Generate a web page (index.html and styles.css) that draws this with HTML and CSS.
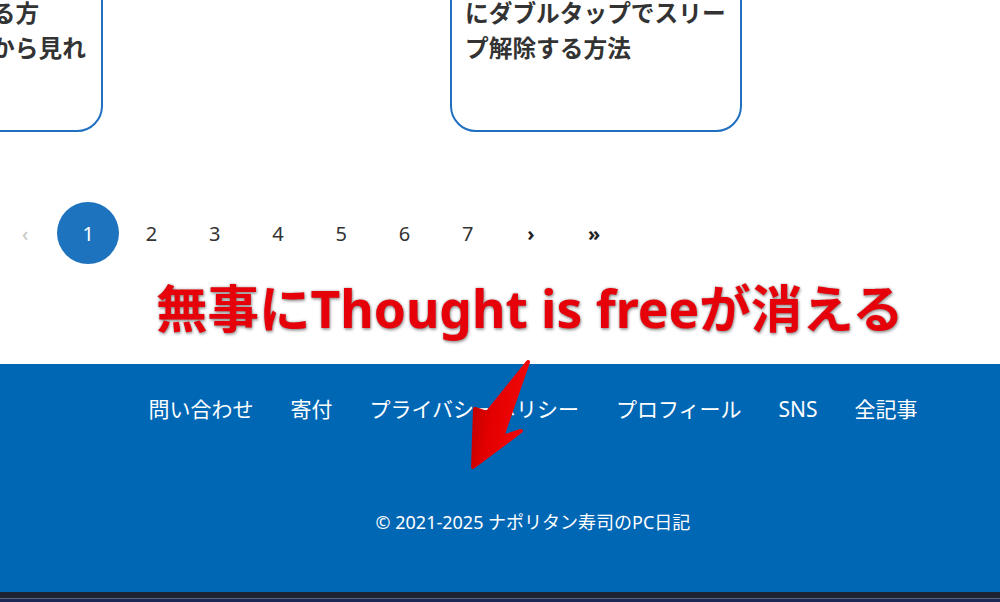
FILE: index.html
```html
<!DOCTYPE html>
<html lang="ja">
<head>
<meta charset="utf-8">
<title>ナポリタン寿司のPC日記</title>
<link rel="stylesheet" href="styles.css">
</head>
<body>
<div class="page">
  <div class="cards">
    <div class="card"><p class="card-title">画面を簡単に見る方<br>スマートフォンから見れ</p></div>
    <div class="card"><p class="card-title">にダブルタップでスリー<br>プ解除する方法</p></div>
  </div>

  <nav class="pager">
    <span class="pg pg-disabled">‹</span>
    <span class="pg pg-active">1</span>
    <span class="pg">2</span>
    <span class="pg">3</span>
    <span class="pg">4</span>
    <span class="pg">5</span>
    <span class="pg">6</span>
    <span class="pg">7</span>
    <span class="pg pg-strong">›</span>
    <span class="pg pg-strong">»</span>
  </nav>

  <footer class="footer">
    <ul class="footer-nav">
      <li>問い合わせ</li>
      <li>寄付</li>
      <li>プライバシーポリシー</li>
      <li>プロフィール</li>
      <li>SNS</li>
      <li>全記事</li>
    </ul>
    <p class="copyright">© 2021-2025 ナポリタン寿司のPC日記</p>
  </footer>
  <div class="bottom-bar"></div>

  <p class="headline">無事にThought is freeが消える</p>

  <svg class="arrow" viewBox="0 0 1000 602" width="1000" height="602" aria-hidden="true">
    <defs>
      <linearGradient id="ag" x1="0" y1="0" x2="1" y2="0.3">
        <stop offset="0" stop-color="#b80000"/>
        <stop offset="0.45" stop-color="#e40000"/>
        <stop offset="1" stop-color="#f00808"/>
      </linearGradient>
    </defs>
    <polygon points="528,362 487,413 475,409 473,467 521,431 502,437"
      fill="url(#ag)" stroke="url(#ag)" stroke-width="4" stroke-linejoin="round"/>
  </svg>
</div>
</body>
</html>
```

FILE: styles.css
```css
html, body {
  margin: 0;
  padding: 0;
  background: #fff;
  overflow: hidden;
}
.page {
  position: relative;
  width: 1000px;
  height: 602px;
  overflow: hidden;
  font-family: "Noto Sans", "Noto Sans CJK JP", sans-serif;
  color: #333;
}
.cards {
  display: flex;
  gap: 347px;
  margin-left: -189px;
  margin-top: -27px;
}
.card {
  box-sizing: border-box;
  width: 292px;
  flex: none;
  border: 2px solid #1f70c1;
  border-radius: 26px;
  padding: 20px 12px 65px 13px;
  background: #fff;
}
.card-title {
  margin: 0;
  font-family: "Noto Sans CJK JP", sans-serif;
  font-weight: 700;
  font-size: 23.7px;
  line-height: 35px;
  white-space: nowrap;
  color: #333;
}
.pager {
  display: flex;
  gap: 1.25px;
  margin-top: 70px;
  margin-left: -6px;
}
.pg {
  width: 62px;
  height: 62px;
  flex: none;
  display: flex;
  align-items: center;
  justify-content: center;
  font-size: 20px;
  color: #333;
}
.pg-active {
  background: #1e73be;
  color: #fff;
  border-radius: 50%;
}
.pg-disabled {
  color: #c4c4c4;
}
.pg-strong {
  font-weight: 700;
  color: #222;
}
.footer {
  margin-top: 100px;
  background: #0067b5;
  padding: 30px 0 58px 66px;
  color: #fff;
}
.footer-nav {
  list-style: none;
  margin: 0;
  padding: 0;
  display: flex;
  justify-content: center;
  gap: 37px;
  font-size: 21px;
  line-height: 30px;
}
.copyright {
  margin: 86px 0 0 0;
  text-align: center;
  font-size: 18px;
  line-height: 24px;
}
.bottom-bar {
  height: 10px;
  background: linear-gradient(#1c2434 0 6px, #5a6478 6px 7px, #1b2754 7px);
}
.headline {
  position: absolute;
  left: 156px;
  top: 277px;
  margin: 0;
  font-family: "Noto Sans", "Noto Sans CJK JP", sans-serif;
  font-weight: 700;
  font-size: 51.5px;
  line-height: 62px;
  white-space: nowrap;
  color: #e6000a;
  -webkit-text-stroke: 7px #fff;
  paint-order: stroke fill;
  text-shadow: 0 0 3px rgba(0, 0, 0, 0.35), 1px 2px 3px rgba(0, 0, 0, 0.3);
}
.arrow {
  position: absolute;
  left: 0;
  top: 0;
  pointer-events: none;
}
```
